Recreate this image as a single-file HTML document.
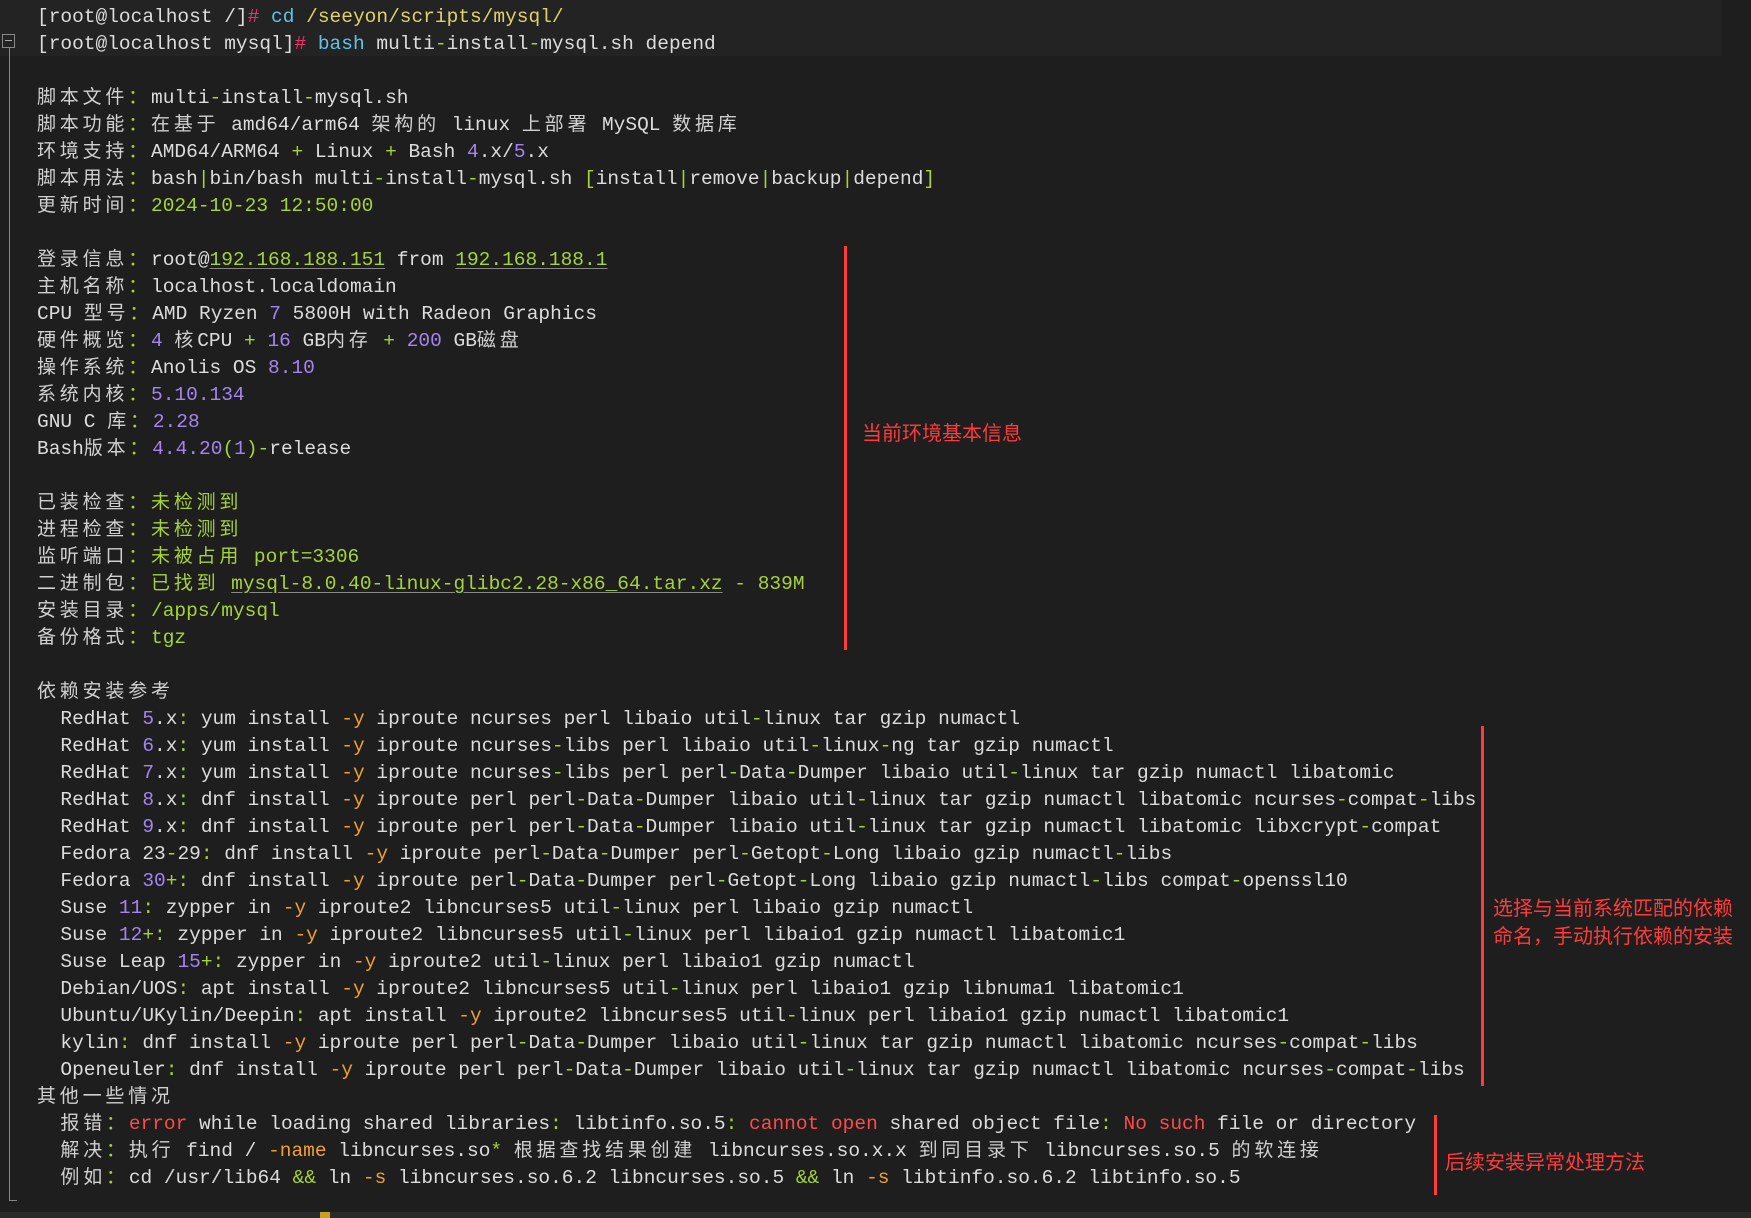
<!DOCTYPE html>
<html><head><meta charset="utf-8"><style>
html,body{margin:0;padding:0;background:#1e1e1e;width:1751px;height:1218px;overflow:hidden;position:relative}
pre{position:absolute;left:37px;top:4px;margin:0;font-family:"Liberation Mono",monospace;font-size:19.5px;line-height:27px;color:#dcdcdc;white-space:pre}
.c{font-family:"Noto Sans CJK SC",sans-serif;letter-spacing:3.8px;font-size:19px;color:#d0d0d0;display:inline-block;height:16px;line-height:16px;overflow:visible}
.g{color:#a6d23a}.p{color:#a484f0}.o{color:#f0a030}.r{color:#ff4a4a}.y{color:#ddd36a}.b{color:#5cc4e8}.k{color:#f0306a}
.u{text-decoration:underline;text-decoration-color:#888;text-underline-offset:3px}
.band{position:absolute;left:0;top:0;width:1722px;height:56px;background:#232323}
.vl{position:absolute;background:#ff3b3b;width:3px}
.ann{position:absolute;color:#ff3b3b;font-family:"Noto Sans CJK SC",sans-serif;font-size:20px;line-height:28px;letter-spacing:0}
</style></head><body>
<div class="band"></div>
<div style="position:absolute;left:2px;top:34px;width:13px;height:14px;border:1px solid #888;box-sizing:border-box"></div>
<div style="position:absolute;left:5px;top:40px;width:7px;height:1px;background:#aaa"></div>
<div style="position:absolute;left:9px;top:48px;width:1px;height:1153px;background:#888"></div>
<div style="position:absolute;left:9px;top:1200px;width:8px;height:1px;background:#888"></div>
<div style="position:absolute;left:0;top:1212px;width:1751px;height:6px;background:#2a2a2a"></div>
<div style="position:absolute;left:320px;top:1212px;width:10px;height:6px;background:#c8a020"></div>
<pre>[root@localhost /]<span class="k">#</span> <span class="b">cd</span> <span class="y">/seeyon/scripts/mysql/</span>
[root@localhost mysql]<span class="k">#</span> <span class="b">bash</span> multi<span class="g">-</span>install<span class="g">-</span>mysql.sh depend

<span class="c">脚本文件</span><span class="c g">：</span>multi<span class="g">-</span>install<span class="g">-</span>mysql.sh
<span class="c">脚本功能</span><span class="c g">：</span><span class="c">在基于</span> amd64/arm64 <span class="c">架构的</span> linux <span class="c">上部署</span> MySQL <span class="c">数据库</span>
<span class="c">环境支持</span><span class="c g">：</span>AMD64/ARM64 <span class="g">+</span> Linux <span class="g">+</span> Bash <span class="p">4</span>.x/<span class="p">5</span>.x
<span class="c">脚本用法</span><span class="c g">：</span>bash<span class="g">|</span>bin/bash multi<span class="g">-</span>install<span class="g">-</span>mysql.sh <span class="g">[</span>install<span class="g">|</span>remove<span class="g">|</span>backup<span class="g">|</span>depend<span class="g">]</span>
<span class="c">更新时间</span><span class="c g">：</span><span class="g">2024-10-23 12:50:00</span>

<span class="c">登录信息</span><span class="c g">：</span>root@<span class="g u">192.168.188.151</span> from <span class="g u">192.168.188.1</span>
<span class="c">主机名称</span><span class="c g">：</span>localhost.localdomain
CPU <span class="c">型号</span><span class="c g">：</span>AMD Ryzen <span class="p">7</span> 5800H with Radeon Graphics
<span class="c">硬件概览</span><span class="c g">：</span><span class="p">4</span> <span class="c">核</span>CPU <span class="g">+</span> <span class="p">16</span> GB<span class="c">内存</span> <span class="g">+</span> <span class="p">200</span> GB<span class="c">磁盘</span>
<span class="c">操作系统</span><span class="c g">：</span>Anolis OS <span class="p">8.10</span>
<span class="c">系统内核</span><span class="c g">：</span><span class="p">5.10.134</span>
GNU C <span class="c">库</span><span class="c g">：</span><span class="p">2.28</span>
Bash<span class="c">版本</span><span class="c g">：</span><span class="p">4.4.20</span><span class="g">(</span><span class="p">1</span><span class="g">)-</span>release

<span class="c">已装检查</span><span class="c g">：</span><span class="c g">未检测到</span>
<span class="c">进程检查</span><span class="c g">：</span><span class="c g">未检测到</span>
<span class="c">监听端口</span><span class="c g">：</span><span class="c g">未被占用</span><span class="g"> port=3306</span>
<span class="c">二进制包</span><span class="c g">：</span><span class="c g">已找到</span><span class="g"> <span class="u">mysql-8.0.40-linux-glibc2.28-x86_64.tar.xz</span> - 839M</span>
<span class="c">安装目录</span><span class="c g">：</span><span class="g">/apps/mysql</span>
<span class="c">备份格式</span><span class="c g">：</span><span class="g">tgz</span>

<span class="c">依赖安装参考</span>
  RedHat <span class="p">5</span>.x<span class="g">:</span> yum install <span class="o">-y</span> iproute ncurses perl libaio util<span class="g">-</span>linux tar gzip numactl
  RedHat <span class="p">6</span>.x<span class="g">:</span> yum install <span class="o">-y</span> iproute ncurses<span class="g">-</span>libs perl libaio util<span class="g">-</span>linux<span class="g">-</span>ng tar gzip numactl
  RedHat <span class="p">7</span>.x<span class="g">:</span> yum install <span class="o">-y</span> iproute ncurses<span class="g">-</span>libs perl perl<span class="g">-</span>Data<span class="g">-</span>Dumper libaio util<span class="g">-</span>linux tar gzip numactl libatomic
  RedHat <span class="p">8</span>.x<span class="g">:</span> dnf install <span class="o">-y</span> iproute perl perl<span class="g">-</span>Data<span class="g">-</span>Dumper libaio util<span class="g">-</span>linux tar gzip numactl libatomic ncurses<span class="g">-</span>compat<span class="g">-</span>libs
  RedHat <span class="p">9</span>.x<span class="g">:</span> dnf install <span class="o">-y</span> iproute perl perl<span class="g">-</span>Data<span class="g">-</span>Dumper libaio util<span class="g">-</span>linux tar gzip numactl libatomic libxcrypt<span class="g">-</span>compat
  Fedora 23<span class="g">-</span>29<span class="g">:</span> dnf install <span class="o">-y</span> iproute perl<span class="g">-</span>Data<span class="g">-</span>Dumper perl<span class="g">-</span>Getopt<span class="g">-</span>Long libaio gzip numactl<span class="g">-</span>libs
  Fedora <span class="p">30</span><span class="g">+:</span> dnf install <span class="o">-y</span> iproute perl<span class="g">-</span>Data<span class="g">-</span>Dumper perl<span class="g">-</span>Getopt<span class="g">-</span>Long libaio gzip numactl<span class="g">-</span>libs compat<span class="g">-</span>openssl10
  Suse <span class="p">11</span><span class="g">:</span> zypper in <span class="o">-y</span> iproute2 libncurses5 util<span class="g">-</span>linux perl libaio gzip numactl
  Suse <span class="p">12</span><span class="g">+:</span> zypper in <span class="o">-y</span> iproute2 libncurses5 util<span class="g">-</span>linux perl libaio1 gzip numactl libatomic1
  Suse Leap <span class="p">15</span><span class="g">+:</span> zypper in <span class="o">-y</span> iproute2 util<span class="g">-</span>linux perl libaio1 gzip numactl
  Debian/UOS<span class="g">:</span> apt install <span class="o">-y</span> iproute2 libncurses5 util<span class="g">-</span>linux perl libaio1 gzip libnuma1 libatomic1
  Ubuntu/UKylin/Deepin<span class="g">:</span> apt install <span class="o">-y</span> iproute2 libncurses5 util<span class="g">-</span>linux perl libaio1 gzip numactl libatomic1
  kylin<span class="g">:</span> dnf install <span class="o">-y</span> iproute perl perl<span class="g">-</span>Data<span class="g">-</span>Dumper libaio util<span class="g">-</span>linux tar gzip numactl libatomic ncurses<span class="g">-</span>compat<span class="g">-</span>libs
  Openeuler<span class="g">:</span> dnf install <span class="o">-y</span> iproute perl perl<span class="g">-</span>Data<span class="g">-</span>Dumper libaio util<span class="g">-</span>linux tar gzip numactl libatomic ncurses<span class="g">-</span>compat<span class="g">-</span>libs
<span class="c">其他一些情况</span>
  <span class="c">报错</span><span class="c g">：</span><span class="r">error</span> while loading shared libraries<span class="g">:</span> libtinfo.so.5<span class="g">:</span> <span class="r">cannot open</span> shared object file<span class="g">:</span> <span class="r">No such</span> file or directory
  <span class="c">解决</span><span class="c g">：</span><span class="c">执行</span> find / <span class="o">-name</span> libncurses.so<span class="g">*</span> <span class="c">根据查找结果创建</span> libncurses.so.x.x <span class="c">到同目录下</span> libncurses.so.5 <span class="c">的软连接</span>
  <span class="c">例如</span><span class="c g">：</span>cd /usr/lib64 <span class="g">&amp;&amp;</span> ln <span class="o">-s</span> libncurses.so.6.2 libncurses.so.5 <span class="g">&amp;&amp;</span> ln <span class="o">-s</span> libtinfo.so.6.2 libtinfo.so.5</pre>
<div class="vl" style="left:844px;top:246px;height:404px"></div>
<div class="vl" style="left:1481px;top:726px;height:360px"></div>
<div class="vl" style="left:1434px;top:1115px;height:80px"></div>
<div class="ann" style="left:862px;top:418px">当前环境基本信息</div>
<div class="ann" style="left:1493px;top:893px">选择与当前系统匹配的依赖<br>命名，手动执行依赖的安装</div>
<div class="ann" style="left:1445px;top:1147px">后续安装异常处理方法</div>
</body></html>
